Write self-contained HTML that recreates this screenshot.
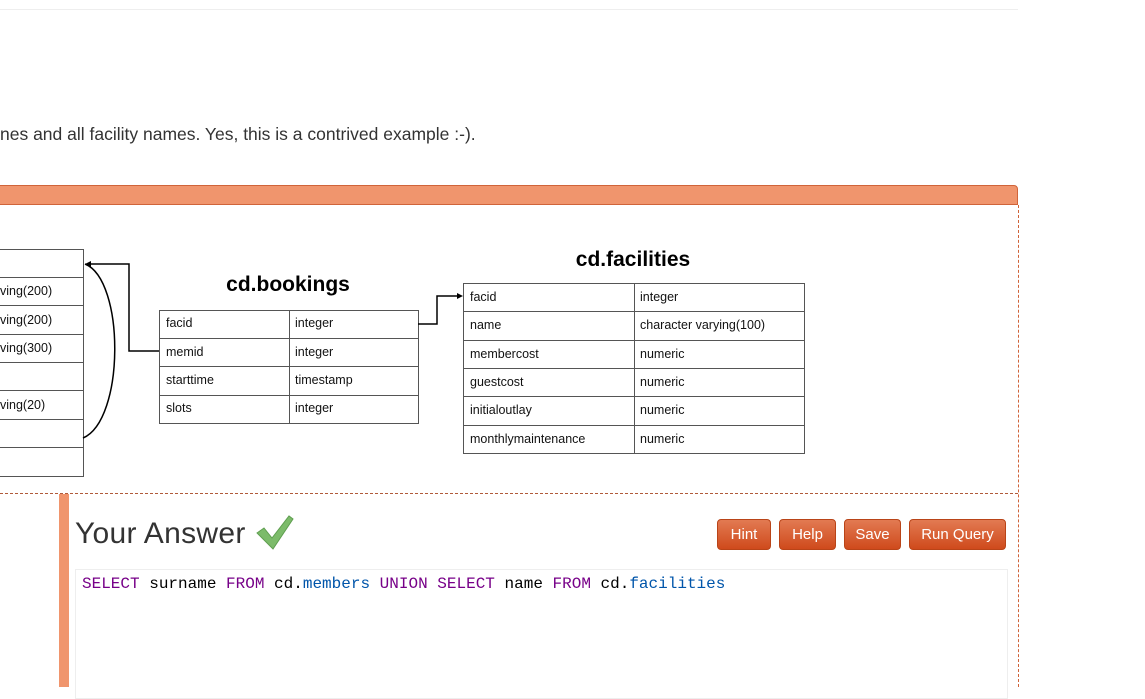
<!DOCTYPE html>
<html><head><meta charset="utf-8"><style>
body{margin:0;width:1145px;height:687px;overflow:hidden;background:#fff;position:relative;font-family:"Liberation Sans",sans-serif}
.a{position:absolute}
.btn{position:absolute;top:519px;height:31px;border-radius:4px;background:linear-gradient(#e27a52,#cf4a1c);border:1px solid #b94418;box-sizing:border-box;color:#fff;font-size:15px;line-height:29px;text-align:center}
.code{font-family:"Liberation Mono","DejaVu Sans Mono",monospace;font-size:16px}
.k{color:#708}.v{color:#05a}
</style></head><body>
<div class="a" style="left:0;top:9px;width:1018px;height:1px;background:#eee"></div>
<div class="a" style="left:0;top:124px;font-size:17.5px;color:#333;white-space:nowrap">nes and all facility names. Yes, this is a contrived example :-).</div>
<div class="a" style="left:-6px;top:185px;width:1024px;height:20px;background:#f0956d;border:1px solid #d0643a;border-radius:0 4px 0 0;box-sizing:border-box"></div>
<div class="a" style="left:1018px;top:205px;height:482px;border-left:1px dashed #d0643a"></div>
<div class="a" style="left:0;top:493px;width:1018px;border-top:1px dashed #b05a3a"></div>
<div class="a" style="left:59px;top:494px;width:10px;height:193px;background:#f0956d"></div>
<svg class="a" style="left:0;top:0" width="1145" height="687" font-family="Liberation Sans,Arial,sans-serif">
<g stroke="#555" stroke-width="1" fill="none">
<path d="M0 249.5H83.5V476.5H0"/>
<path d="M0 277.5H83M0 305.5H83M0 334.5H83M0 362.5H83M0 390.5H83M0 419.5H83M0 447.5H83"/>
<rect x="159.5" y="310.5" width="259" height="113"/>
<path d="M159 338.5H418M159 366.5H418M159 395.5H418M289.5 310V423"/>
<rect x="463.5" y="283.5" width="341" height="170"/>
<path d="M463 311.5H805M463 340.5H805M463 368.5H805M463 396.5H805M463 425.5H805M634.5 283V453"/>
</g>
<g stroke="#000" stroke-width="1.5" fill="none">
<path d="M159 351H129V264H88"/>
<path d="M85 264C125 280 125 420 83 438"/>
<path d="M418 324H437V296H458"/>
</g>
<path d="M85 264l6-3v6z M463 296l-6-3v6z" fill="#000"/>
<g font-size="12.5" fill="#111">
<text x="0" y="295">ving(200)</text><text x="0" y="324">ving(200)</text><text x="0" y="352">ving(300)</text><text x="0" y="409">ving(20)</text>
<text x="166" y="327">facid</text><text x="295" y="327">integer</text>
<text x="166" y="356">memid</text><text x="295" y="356">integer</text>
<text x="166" y="384">starttime</text><text x="295" y="384">timestamp</text>
<text x="166" y="412">slots</text><text x="295" y="412">integer</text>
<text x="470" y="301">facid</text><text x="640" y="301">integer</text>
<text x="470" y="329">name</text><text x="640" y="329">character varying(100)</text>
<text x="470" y="358">membercost</text><text x="640" y="358">numeric</text>
<text x="470" y="386">guestcost</text><text x="640" y="386">numeric</text>
<text x="470" y="414">initialoutlay</text><text x="640" y="414">numeric</text>
<text x="470" y="443">monthlymaintenance</text><text x="640" y="443">numeric</text>
</g>
<g font-size="21" font-weight="bold" fill="#000" text-anchor="middle">
<text x="288" y="291">cd.bookings</text><text x="633" y="266">cd.facilities</text>
</g>
<path d="M257 533l7-5 8 10 17-22 4 3-20 30z" fill="#7cbb6a" stroke="#5e9e4f" stroke-width="1"/>
</svg>
<div class="a" style="left:75px;top:517px;font-size:30px;color:#333;letter-spacing:0.3px">Your Answer</div>
<div class="btn" style="left:717px;width:54px">Hint</div>
<div class="btn" style="left:779px;width:57px">Help</div>
<div class="btn" style="left:844px;width:57px">Save</div>
<div class="btn" style="left:909px;width:97px">Run Query</div>
<div class="a" style="left:75px;top:569px;width:933px;height:130px;border:1px solid #eee;box-sizing:border-box"></div>
<div class="a code" style="left:82px;top:575px;white-space:pre"><span class="k">SELECT</span> surname <span class="k">FROM</span> cd.<span class="v">members</span> <span class="k">UNION</span> <span class="k">SELECT</span> name <span class="k">FROM</span> cd.<span class="v">facilities</span></div>
</body></html>
